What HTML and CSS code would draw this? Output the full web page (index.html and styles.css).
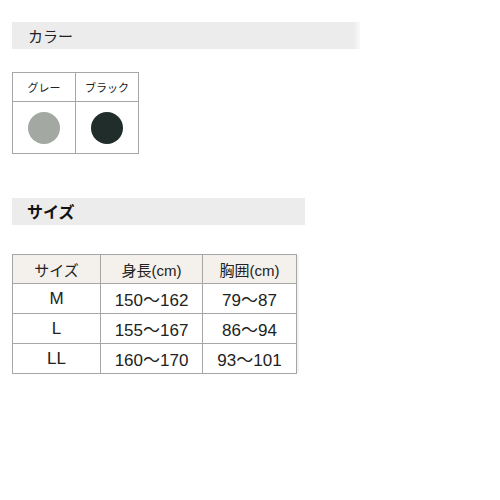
FILE: index.html
```html
<!DOCTYPE html>
<html lang="ja">
<head>
<meta charset="utf-8">
<link rel="stylesheet" href="styles.css">
</head>
<body>
<div class="page">
  <h2 class="bar bar-color">カラー</h2>
  <table class="colors">
    <tr><th>グレー</th><th>ブラック</th></tr>
    <tr><td><span class="dot grey"></span></td><td><span class="dot black"></span></td></tr>
  </table>
  <h2 class="bar bar-size">サイズ</h2>
  <table class="sizes">
    <tr><th>サイズ</th><th>身長(cm)</th><th>胸囲(cm)</th></tr>
    <tr><td>M</td><td>150〜162</td><td>79〜87</td></tr>
    <tr><td>L</td><td>155〜167</td><td>86〜94</td></tr>
    <tr><td>LL</td><td>160〜170</td><td>93〜101</td></tr>
  </table>
</div>
</body>
</html>
```
FILE: styles.css
```css
html, body { margin: 0; padding: 0; background: #fff; }
body { font-family: "Liberation Sans", "Noto Sans CJK JP", sans-serif; color: #222; }
.page { padding: 22px 0 0 12px; }
.bar {
  margin: 0;
  height: 27px;
  line-height: 27px;
  background: #ececec;
  padding-left: 16px;
  box-sizing: border-box;
  font-family: "Noto Sans CJK JP", sans-serif;
}
.bar-color { width: 348px; font-weight: normal; font-size: 15px; background: linear-gradient(to right, #ececec 342px, #fff 350px); }
.bar-size { width: 293px; font-weight: bold; margin-top: 44px; font-size: 16px; padding-left: 15px; color: #111; }
table { border-collapse: collapse; }
.colors { margin-top: 23px; }
.colors th, .colors td { border: 1px solid #a6a6a6; width: 62px; text-align: center; padding: 0; }
.colors th { height: 28px; font-size: 11px; font-weight: normal; font-family: "Noto Sans CJK JP", sans-serif; }
.colors td { height: 51px; }
.dot { display: inline-block; width: 32px; height: 32px; border-radius: 50%; vertical-align: middle; margin-top: 1px; }
.grey { background: #a3a8a2; }
.black { background: #212d2a; }
.sizes { margin-top: 29px; box-shadow: 3px 0 0 -1px #f2f2f2; }
.sizes th, .sizes td { border: 1px solid #a6a6a6; text-align: center; padding: 0; font-weight: normal; }
.sizes th { height: 28px; background: #f4f0ec; font-size: 15px; }
.sizes td { height: 29px; font-size: 17px; }
.sizes tr > :nth-child(1) { width: 87px; }
.sizes tr > :nth-child(2) { width: 101px; }
.sizes tr > :nth-child(3) { width: 93px; }
```
